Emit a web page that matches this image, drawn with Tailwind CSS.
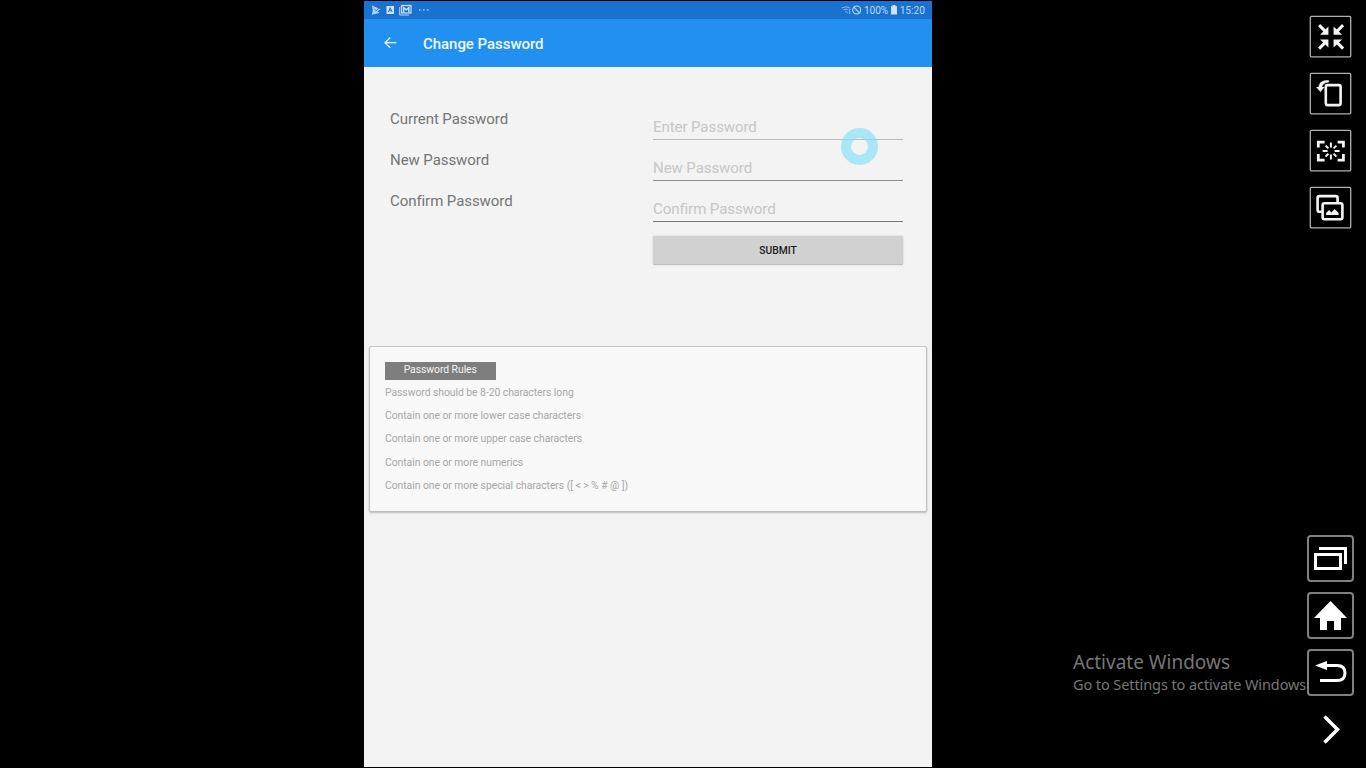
<!DOCTYPE html>
<html lang="en">
<head>
<meta charset="utf-8">
<title>Change Password</title>
<script src="https://cdn.jsdelivr.net/npm/@tailwindcss/browser@4"></script>
</head>
<body class="relative flex h-[768px] w-[1366px] justify-between overflow-hidden bg-black font-['Roboto',sans-serif]">
  <main class="relative mt-px ml-[364px] flex h-[766px] w-[568px] flex-col bg-[#f3f3f3]">
    <div class="flex h-[18px] items-center justify-between bg-[#1971d0] pr-[7px] pl-2 text-[10.2px] text-[#bed8f4]">
      <svg class="h-[14px] w-[60px]" viewBox="0 0 60 14" fill="none">
        <path d="M-.3 2.300L8.800 6.300 5.500 8 7.500 10 -.3 11.700 .8 7z" fill="#a9cff3"/>
        <path d="M2.500 6.300l1.700 1.500L7 5" stroke="#1971d0" stroke-width=".8"/>
        <rect x="14.500" y="3" width="7.500" height="8" rx=".6" fill="#cfe2f6"/>
        <path d="M16.400 9l1.800-4.300L20 9M17.200 7.700h2" stroke="#1971d0" stroke-width="1"/>
        <path d="M27.700 4v8h9.300" stroke="#bed8f4"/>
        <rect x="29.500" y="2.500" width="9.500" height="7.500" stroke="#cfe2f6" stroke-width="1.200"/>
        <path d="M31.600 9.500V4.500l2.600 2.200 2.600-2.200v5" stroke="#cfe2f6" stroke-width="1.500"/>
        <path d="M47 7h1.500M51 7h1.500M55 7h1.500" stroke="#a9cff3" stroke-width="1.300"/>
      </svg>
      <div class="flex items-center">
        <svg class="mr-[3px] h-[14px] w-5" viewBox="0 0 20 14" fill="none" stroke="#bed8f4">
          <path d="M.8 5Q4.800 2.500 9 5M2.500 7Q5 5 7.300 7M4 9Q5.500 8 6.800 10" stroke="#8fbbea"/>
          <path d="M8.700 6v5" stroke="#8fbbea"/>
          <circle cx="15.700" cy="7" r="4" stroke-width="1.200"/><path d="M12.900 4.200l5.600 5.600" stroke-width="1.200"/>
        </svg>
        <span class="pt-px tracking-[-0.1px]">100%</span>
        <svg class="mr-[3px] ml-[2.500px] h-[10px] w-[6px]" viewBox="0 0 6 10" fill="#cfe2f6"><path d="M1.500 0h3v1.200H6V9.500H0V1.200h1.500z"/></svg>
        <span class="pt-px">15:20</span>
      </div>
    </div>
    <header class="flex h-12 items-center bg-[#2190f0] pl-5 text-[15px] font-medium text-[#f2f8fd]">
      <svg class="mr-[26px] mb-px h-[12px] w-[13px]" viewBox="0 0 13 12" fill="none" stroke="#eef6fd" stroke-width="1.300"><path d="M12.300 5.700H1.200M6.300 .5L1.100 5.700l5.200 5.200"/></svg>
      <h1 class="pt-[2px] tracking-[-0.04px]">Change Password</h1>
    </header>
    <form class="mt-[31px] flex h-[170px] justify-between pr-[28px] pl-[26px] text-[15px] tracking-[-0.07px] text-[#757575]">
      <div class="flex flex-col">
        <label class="h-[41px] pt-[10px] leading-[22px]">Current Password</label>
        <label class="h-[41px] pt-[10px] leading-[22px]">New Password</label>
        <label class="h-[41px] pt-[10px] leading-[22px]">Confirm Password</label>
      </div>
      <div class="flex w-[251px] flex-col text-[#c6c6c6]">
        <div class="mr-px h-[42px] border-b border-[#bababa] pt-[18px] leading-[22px]">Enter Password</div>
        <div class="mr-px h-[41px] border-b border-[#909090] pt-[17px] leading-[22px]">New Password</div>
        <div class="mr-px h-[41px] border-b border-[#777777] pt-[17px] leading-[22px]">Confirm Password</div>
        <button type="button" class="mt-[14px] mr-px h-[28px] rounded-[1px] bg-[#d1d1d1] pt-[2px] text-[10.300px] font-medium tracking-normal text-[#1b1b1b] shadow-[0_1px_1px_#bbb,0_0_2px_#ccc]">SUBMIT</button>
      </div>
    </form>
    <section class="mx-[6px] mt-[79px] flex h-[164px] flex-col items-start rounded-[1px] bg-[#f8f8f8] pt-[15px] pl-[15px] text-[10.350px] tracking-[-0.03px] text-[#a7a7a7] shadow-[0_1px_2px_1px_#bbb,0_0_0_1px_#cacaca]">
      <h2 class="mb-px h-[18px] w-[110.500px] bg-[#7e7e7e] text-center leading-[16px] text-[#f5f5f5]">Password Rules</h2>
      <p class="h-[23.200px] leading-[23px]">Password should be 8-20 characters long</p>
      <p class="h-[23.200px] leading-[23px]">Contain one or more lower case characters</p>
      <p class="h-[23.200px] leading-[23px]">Contain one or more upper case characters</p>
      <p class="h-[23.200px] leading-[23px]">Contain one or more numerics</p>
      <p class="h-[23.200px] leading-[23px]">Contain one or more special characters ([ &lt; &gt; % # @ ])</p>
    </section>
    <div class="absolute top-[127px] left-[477px] size-[36.500px] rounded-full border-[10px] border-[#87e0fa]/70"></div>
  </main>

  <aside class="flex w-[62px] flex-col items-center justify-between pt-[15.5px] pr-[9px] pb-[15px]">
    <div class="flex flex-col gap-[15px] pr-px">
      <button class="size-[42px]">
        <svg class="size-[42px] overflow-visible" viewBox="-1.600 -.6 42 42" fill="none" stroke="#f4f4f4" stroke-width="3"><rect x="-.3" y="-.2" width="40.400" height="40.400" rx="1" stroke="#b0b0b0" stroke-width="1.300"/><path d="M8.500 8.500l6 6M32.500 8.500l-6 6M8.500 32l6-6M32.500 32l-6-6"/><g fill="#f4f4f4" stroke="none"><path d="M17.800 10v8.200H9.500l8.300-8.200zM23 10v8.200h8.500zM17.800 31v-8.200H9.500zM23 31v-8.200h8.500z"/></g></svg>
      </button>
      <button class="size-[42px]">
        <svg class="size-[42px] overflow-visible" viewBox="-1.600 -.6 42 42" fill="none" stroke="#f4f4f4"><rect x="-.3" y="-.2" width="40.400" height="40.400" rx="1" stroke="#b0b0b0" stroke-width="1.300"/><rect x="15.200" y="11.500" width="14.800" height="20" rx="1.800" stroke-width="2.600"/><path d="M18 7Q8.500 6.300 8 14h3.200Q11.500 9.200 18 8.500z" fill="#f4f4f4" stroke-width=".6"/><path d="M5.500 13.500h8.500L9.800 18.500z" fill="#f4f4f4" stroke="none"/></svg>
      </button>
      <button class="size-[42px]">
        <svg class="size-[42px] overflow-visible" viewBox="-1.600 -.6 42 42" fill="none" stroke="#f4f4f4"><rect x="-.3" y="-.2" width="40.400" height="40.400" rx="1" stroke="#b0b0b0" stroke-width="1.300"/><path d="M14 11.500H7.700V17M27 11.500h5.800V17M7.700 23.500v6H14M32.800 23.500v6H27" stroke-width="2.800"/><path d="M20.300 12v5M20.300 24v5M12 20.500h5M24 20.500h5M15 15l2.800 2.800M25.800 15l-2.800 2.800M15 26l2.800-2.800M25.800 26l-2.800-2.800" stroke-width="2"/></svg>
      </button>
      <button class="size-[42px]">
        <svg class="size-[42px] overflow-visible" viewBox="-1.600 -.6 42 42" fill="none" stroke="#f4f4f4" stroke-width="2.600"><rect x="-.3" y="-.2" width="40.400" height="40.400" rx="1" stroke="#b0b0b0" stroke-width="1.300"/><path d="M11 24.200H8.800Q7 24.200 7 22.400V10.300Q7 8.500 8.800 8.500H25.200Q27 8.500 27 10.300V15"/><rect x="12" y="15.700" width="19.800" height="16" rx="2"/><path d="M15.500 27.500v-2l3-3 2.300 2.300 3.200-3.300 4 4v2z" fill="#f4f4f4" stroke="none"/></svg>
      </button>
    </div>
    <div class="flex flex-col gap-[10px]">
      <button class="size-[47px] rounded-[4px] border-2 border-[#808080]">
        <svg class="size-[43px]" viewBox="0 0 43 43" fill="none" stroke="#fff" stroke-width="3"><rect x="6.500" y="17.500" width="25" height="14"/><path d="M10 11.500h26.500v15.500"/></svg>
      </button>
      <button class="size-[47px] rounded-[4px] border-2 border-[#808080]">
        <svg class="size-[43px]" viewBox="0 0 43 43" fill="#fff"><path d="M21.500 7L38 24h-6v12h-7v-9h-7v9h-7V24H5z"/></svg>
      </button>
      <button class="size-[47px] rounded-[4px] border-2 border-[#808080]">
        <svg class="size-[43px]" viewBox="0 0 43 43" fill="none"><path d="M16 14.500H28Q36 14.500 36 22T28 29.500H11" stroke="#fff" stroke-width="3"/><path d="M6 14.500L18 10v9z" fill="#fff"/></svg>
      </button>
      <svg class="h-[47px] w-[47px]" viewBox="0 0 47 47" fill="none" stroke="#fff" stroke-width="3.500"><path d="M17.500 10.500L30.500 23.500 17.500 36.500"/></svg>
    </div>
  </aside>

  <div class="absolute top-[650px] left-[1073px] font-['Noto_Sans',sans-serif] whitespace-nowrap text-[#777777]">
    <p class="h-[24px] text-[19px] leading-[24px]">Activate Windows</p>
    <p class="h-[20px] text-[14.500px] leading-[21px] tracking-[-0.09px]">Go to Settings to activate Windows.</p>
  </div>
</body>
</html>
